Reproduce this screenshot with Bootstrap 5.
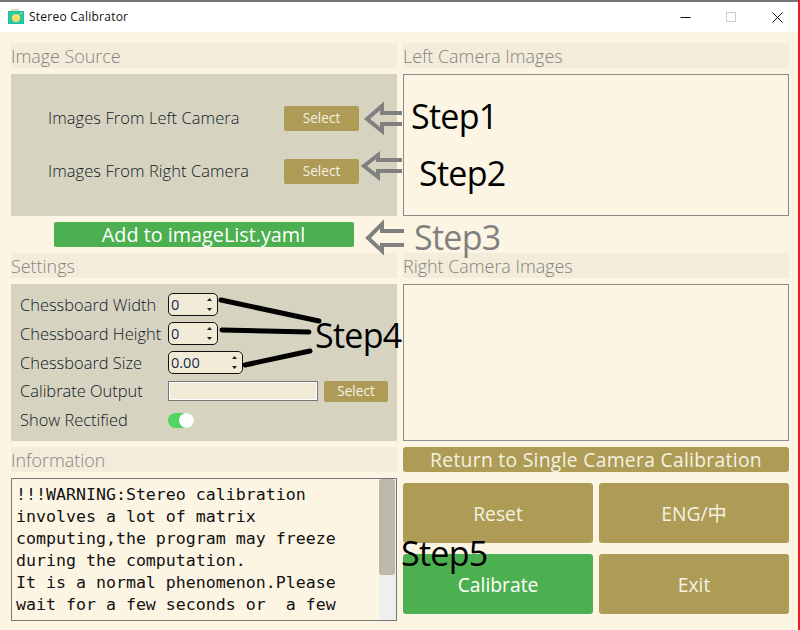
<!DOCTYPE html>
<html lang="en">
<head>
<meta charset="utf-8">
<title>Stereo Calibrator</title>
<link href="https://cdn.jsdelivr.net/npm/bootstrap@5.3.0/dist/css/bootstrap.min.css" rel="stylesheet">
<style>
html,body{margin:0;height:630px;overflow:hidden;background:#fdf5e3;}
body{font-family:"Open Sans","Noto Sans CJK SC",sans-serif;font-weight:300;color:#0f1a26;}
.appwin{position:relative;width:800px;height:630px;background:#fdf5e3;border-right:2px solid #ed1c24;overflow:hidden;}
.titlebar{height:32px;background:#fff;border-top:2px solid #77777c;font-size:12px;font-weight:400;color:#111;padding-left:8px;padding-right:0;}
.titletext{margin-left:5px;letter-spacing:.02em;}
.winctl{margin-right:-2px;}
.winbtn{width:46px;height:30px;}
.content{display:grid;grid-template-columns:386px 386px;column-gap:6px;padding:11px 0 0 11px;}
.colstack{display:flex;flex-direction:column;gap:6px;}
.sechead{height:25px;line-height:26px;background:#f3ecdb;color:#84847f;font-size:17.9px;white-space:nowrap;}
.panelgrey{background:#d6d3c1;}
.srcpanel{height:142px;padding:32px 38px 0 37px;}
.srcrow{height:25px;margin-bottom:28px;font-size:16.45px;letter-spacing:.08px;}
.selbtn{width:75px;height:25px;padding:0;border:0;border-radius:2px;background:#ad9b56;color:#f5f2e2;font-size:13.6px;font-weight:400;}
.selbtn:hover{background:#ad9b56;color:#f5f2e2;}
.addbtn{width:300px;height:25px;padding:0;border:0;border-radius:2px;background:#4caf50;color:#fff;font-size:19.8px;font-weight:400;align-self:center;line-height:25px;margin-left:-1px;}
.addbtn:hover{background:#4caf50;color:#fff;}
.setpanel{height:157px;padding:9px 9px 0 9px;font-size:16.45px;}
.setrow{height:24px;margin-bottom:5px;}
.setrow:nth-child(3){margin-bottom:4px;}
.setlabel{width:148px;white-space:nowrap;}
.spin{height:23px;border:1px solid #111;border-radius:5px;background:#f0ead7;font-size:14.5px;font-weight:400;padding-left:2px;color:#102a52;line-height:21px;position:relative;margin-top:-1px;}
.spinw{width:50px;}
.spinl{width:75px;}
.arrows{position:absolute;right:4px;top:3px;width:7px;height:15px;}
.pathbox{width:150px;height:20px;border:1px solid #777;background:#f0ead7;box-shadow:inset 0 0 0 1px #fff;}
.selsm{width:64px;height:21px;margin-left:6px;}
.toggle{width:26px;height:15px;border-radius:8px;background:#52d463;position:relative;}
.knob{position:absolute;right:0;top:0;width:15px;height:15px;border-radius:50%;background:#fff;}
.infobox{height:143px;border:1px solid #777;position:relative;overflow:hidden;font-family:"DejaVu Sans Mono","Liberation Mono",monospace;font-weight:400;font-size:16.6px;line-height:22px;color:#111;padding:5px 0 0 4px;}
.infotxt{width:345px;}
.scrolltrack{position:absolute;right:0;top:0;bottom:0;width:17px;background:#efefef;}
.scrollthumb{position:absolute;right:1px;top:0;width:16px;height:96px;background:#bcb8aa;border-radius:3px;}
.imgbox{border:1px solid #8b8b8b;}
.imgbox1{height:142px;}
.spacer25{height:25px;}
.imgbox2{height:157px;}
.retbtn{height:25px;padding:0;border:0;border-radius:3px;background:#ad9b56;color:#f5f2e2;font-size:19.3px;font-weight:400;line-height:25px;letter-spacing:.3px;}
.actgrid{display:grid;grid-template-columns:190px 190px;gap:11px 6px;margin-top:5px;}
.actbtn{height:60px;padding:2px 0 0;border:0;border-radius:3px;background:#ad9b56;color:#f5f2e2;font-size:19.3px;font-weight:400;}
.actgreen{background:#4caf50;color:#fff;}
.stepnote{position:absolute;color:#000;font-size:34px;line-height:40px;font-weight:400;white-space:nowrap;letter-spacing:-.7px;}
.s1{left:411px;top:96px;}
.s2{left:419px;top:153px;}
.s3{left:414px;top:217px;color:#808080;}
.s4{left:315px;top:315px;}
.s5{left:401px;top:533px;}
.overlay{position:absolute;left:0;top:0;width:800px;height:630px;pointer-events:none;}
</style>
</head>
<body>
<div class="appwin">
  <div class="titlebar d-flex align-items-center">
    <svg width="16" height="16" viewBox="0 0 16 16"><rect x="3" y="0" width="8" height="3" fill="#e8dca8"/><rect x="0" y="2" width="16" height="13" fill="#1fbf9f"/><rect x="1" y="3" width="14" height="11" fill="#2bc8a8"/><circle cx="8" cy="9" r="4" fill="#f6dd6a"/><rect x="12" y="4" width="2" height="1" fill="#f6dd6a"/></svg>
    <span class="titletext">Stereo Calibrator</span>
    <div class="ms-auto d-flex winctl">
      <div class="winbtn d-flex align-items-center justify-content-center"><svg width="11" height="11" viewBox="0 0 11 11"><path d="M0.5 5.5h10" stroke="#111" fill="none"/></svg></div>
      <div class="winbtn d-flex align-items-center justify-content-center"><svg width="11" height="11" viewBox="0 0 11 11"><rect x=".5" y=".5" width="9" height="9" stroke="#ccc" fill="none"/></svg></div>
      <div class="winbtn d-flex align-items-center justify-content-center"><svg width="11" height="11" viewBox="0 0 11 11"><path d="M.5 .5l10 10M10.5 .5l-10 10" stroke="#111" fill="none"/></svg></div>
    </div>
  </div>
  <div class="content">
    <div class="colstack">
      <div class="sechead">Image Source</div>
      <div class="panelgrey srcpanel">
        <div class="srcrow d-flex align-items-center justify-content-between"><span>Images From Left Camera</span><button class="btn selbtn" type="button">Select</button></div>
        <div class="srcrow d-flex align-items-center justify-content-between"><span>Images From Right Camera</span><button class="btn selbtn" type="button">Select</button></div>
      </div>
      <button class="btn addbtn" type="button">Add to imageList.yaml</button>
      <div class="sechead">Settings</div>
      <div class="panelgrey setpanel">
        <div class="setrow d-flex align-items-center"><span class="setlabel">Chessboard Width</span><div class="spin spinw">0<svg class="arrows" viewBox="0 0 7 15"><path d="M3.5 1L6 4H1zM3.5 14L1 11h5z" fill="#222"/></svg></div></div>
        <div class="setrow d-flex align-items-center"><span class="setlabel">Chessboard Height</span><div class="spin spinw">0<svg class="arrows" viewBox="0 0 7 15"><path d="M3.5 1L6 4H1zM3.5 14L1 11h5z" fill="#222"/></svg></div></div>
        <div class="setrow d-flex align-items-center"><span class="setlabel">Chessboard Size</span><div class="spin spinl">0.00<svg class="arrows" viewBox="0 0 7 15"><path d="M3.5 1L6 4H1zM3.5 14L1 11h5z" fill="#222"/></svg></div></div>
        <div class="setrow d-flex align-items-center"><span class="setlabel">Calibrate Output</span><div class="pathbox"></div><button class="btn selbtn selsm" type="button">Select</button></div>
        <div class="setrow d-flex align-items-center"><span class="setlabel">Show Rectified</span><div class="toggle"><div class="knob"></div></div></div>
      </div>
      <div class="sechead">Information</div>
      <div class="infobox">
        <div class="infotxt">!!!WARNING:Stereo calibration involves a lot of matrix computing,the program may freeze during the computation.<br>It is a normal phenomenon.Please wait for a few seconds or&nbsp; a few minutes.</div>
        <div class="scrolltrack"></div><div class="scrollthumb"></div>
      </div>
    </div>
    <div class="colstack">
      <div class="sechead">Left Camera Images</div>
      <div class="imgbox imgbox1"></div>
      <div class="spacer25"></div>
      <div class="sechead">Right Camera Images</div>
      <div class="imgbox imgbox2"></div>
      <button class="btn retbtn" type="button">Return to Single Camera Calibration</button>
      <div class="actgrid">
        <button class="btn actbtn" type="button">Reset</button>
        <button class="btn actbtn" type="button">ENG/中</button>
        <button class="btn actbtn actgreen" type="button">Calibrate</button>
        <button class="btn actbtn" type="button">Exit</button>
      </div>
    </div>
  </div>
  <svg class="overlay" viewBox="0 0 800 630">
    <g fill="none" stroke="#808080" stroke-width="4">
      <path d="M402 113H382V106L367 119L382 131V124H402"/>
      <path d="M402 160H378V155L364 166L378 177V171H402"/>
      <path d="M404 231H382V224L368 238L382 251V245H404"/>
    </g>
    <g fill="none" stroke="#000" stroke-width="5" stroke-linecap="round">
      <path d="M221 300L319 321"/>
      <path d="M222 330L309 332"/>
      <path d="M245 365L310 351"/>
    </g>
  </svg>
  <div class="stepnote s1">Step1</div>
  <div class="stepnote s2">Step2</div>
  <div class="stepnote s3">Step3</div>
  <div class="stepnote s4">Step4</div>
  <div class="stepnote s5">Step5</div>
</div>
<script src="https://cdn.jsdelivr.net/npm/bootstrap@5.3.0/dist/js/bootstrap.bundle.min.js"></script>
</body>
</html>
